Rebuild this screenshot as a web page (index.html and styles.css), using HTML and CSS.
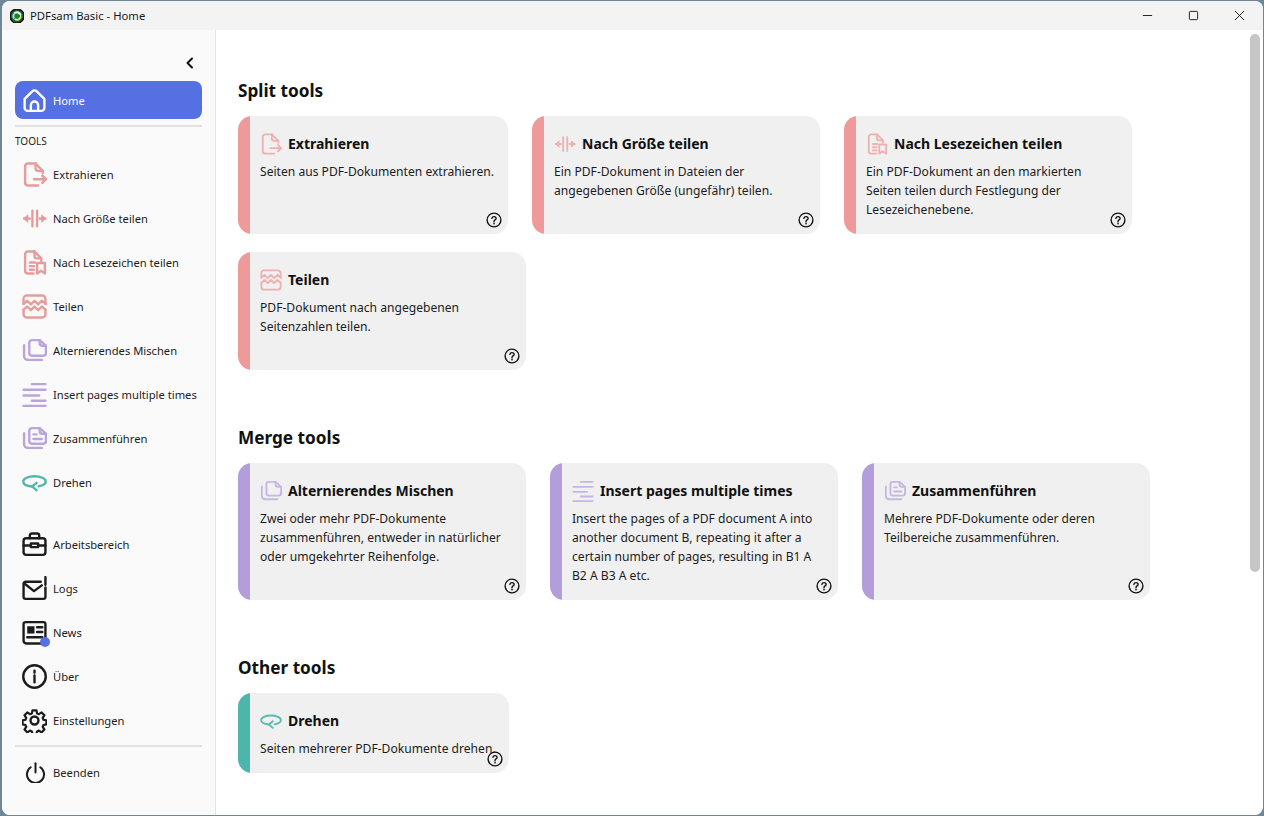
FILE: index.html
```html
<!DOCTYPE html>
<html lang="de">
<head>
<meta charset="utf-8">
<title>PDFsam Basic - Home</title>
<link rel="stylesheet" href="styles.css">
</head>
<body>
<svg class="sprite" aria-hidden="true">
<defs>
<symbol id="i-home" viewBox="0 0 24 24"><path d="M2.500 10.500 9.800 3.200a3 3 0 0 1 4.400 0l7.300 7.300V19a3 3 0 0 1-3 3h-13a3 3 0 0 1-3-3z"/><path d="M8.500 22v-5.500a3.500 3.500 0 0 1 7 0V22"/></symbol>
<symbol id="i-extract" viewBox="0 0 24 24"><path d="M13 1.500H5.500A2.500 2.500 0 0 0 3 4v16a2.500 2.500 0 0 0 2.500 2.500H15.500"/><path d="M13 1.500 20 8.500v2"/><path d="M13 1.500V6a2.500 2.500 0 0 0 2.500 2.500H20"/><path d="M11.500 16.500H23M19.500 13l3.500 3.500-3.500 3.500"/></symbol>
<symbol id="i-size" viewBox="0 0 24 24"><path d="M10 4.500v15M14.500 4.500v15"/><path d="M2 12h5.500M22.500 12H17"/><path class="fill" d="M6 7.800v8.400L.8 12zM18.500 7.800v8.400l5-4.200z"/></symbol>
<symbol id="i-bookmark" viewBox="0 0 24 24"><path d="M12 1.500H5.500A2.500 2.500 0 0 0 3 4v16a2.500 2.500 0 0 0 2.500 2.500H11"/><path d="M12 1.500 18.500 8v2.500"/><path d="M12 1.500V6a2 2 0 0 0 2 2h4.500"/><path d="M7.500 12h5M7.500 15.500h4M7.500 19h4"/><path d="M14.500 12.500h7.500v10l-3.700-2.500-3.800 2.500z"/></symbol>
<symbol id="i-split" viewBox="0 0 24 24"><path d="M1.500 9.500V4.500a3 3 0 0 1 3-3h15a3 3 0 0 1 3 3v5"/><path d="M1.500 9.500l3.500-3 3.500 3.500 3.500-3.500 3.500 3.500 3.500-3.500 4 3"/><path d="M1.500 15l3.500-3 3.500 3.500L12 12l3.500 3.500L19 12l3.500 3"/><path d="M1.500 15v4.500a3 3 0 0 0 3 3h15a3 3 0 0 0 3-3V15"/></symbol>
<symbol id="i-mix" viewBox="0 0 24 24"><path d="M7 4.500A2.500 2.500 0 0 1 9.500 2h7.500l6 5.500v7A2.500 2.500 0 0 1 20.500 17h-11A2.500 2.500 0 0 1 7 14.500z"/><path d="M17 2v3a2.500 2.500 0 0 0 2.500 2.500H23"/><path d="M2 7v10.500A3.500 3.500 0 0 0 5.500 21H19"/></symbol>
<symbol id="i-insert" viewBox="0 0 24 24"><path d="M9.500 2h13M1.500 7.500h21M1.500 13h15M9.500 18h13M1.500 23h21"/></symbol>
<symbol id="i-merge" viewBox="0 0 24 24"><path d="M7 4.500A2.500 2.500 0 0 1 9.500 2h7.500l6 5.500v7A2.500 2.500 0 0 1 20.500 17h-11A2.500 2.500 0 0 1 7 14.500z"/><path d="M17 2v3a2.500 2.500 0 0 0 2.500 2.500H23"/><path d="M2 7v10.500A3.500 3.500 0 0 0 5.500 21H19"/><path d="M11 8h3M11 12.500h8"/></symbol>
<symbol id="i-rotate" viewBox="0 0 24 24"><path d="M9.500 15.800C4.500 15.300 1.200 13.500 1.200 11 1.200 8.100 6 6 12 6s10.800 2.100 10.800 5c0 2.200-3 4-6.800 4.600"/><path d="M14 12.300l-4.200 3.500 4.200 3.700"/></symbol>
<symbol id="i-work" viewBox="0 0 24 24"><rect x="1.500" y="6" width="21" height="16" rx="2.500"/><path d="M7.500 6V3.500a2 2 0 0 1 2-2h5a2 2 0 0 1 2 2V6"/><path d="M1.500 13h6.500M16 13h6.500"/><path d="M8.500 11h7v3.500h-7z"/></symbol>
<symbol id="i-logs" viewBox="0 0 24 24"><path d="M18 5.500H3.500a2 2 0 0 0-2 2V20a2 2 0 0 0 2 2h17a2 2 0 0 0 2-2v-7"/><path d="M2 7l9.500 7.500L19 9"/><path d="M22.500 1v7.500M22.500 11v1"/></symbol>
<symbol id="i-news" viewBox="0 0 24 24"><path d="M4 22.500a2.500 2.500 0 0 1-2.500-2.500V4A2 2 0 0 1 3.500 2h17a2 2 0 0 1 2 2v16a2 2 0 0 1-2 2.500z"/><path class="fill" d="M5 6h7v7H5z"/><path d="M14.500 7h5M14.500 11.500h5M5 16.500h14.500"/></symbol>
<symbol id="i-info" viewBox="0 0 24 24"><circle cx="12" cy="12" r="10.800"/><path d="M12 11v6.500"/><path d="M12 6.500v1.800"/></symbol>
<symbol id="i-gear" viewBox="0 0 24 24"><circle cx="12" cy="12" r="3.800"/><path d="M10 1.500h4l.7 3.200 1.900.8 2.800-1.800 2.900 2.900-1.800 2.800.8 1.900 3 .7v4l-3 .7-.8 1.900 1.800 2.800-2.900 2.900-2.800-1.800-1.900.8-.7 2.900h-4l-.7-2.900-1.900-.8-2.800 1.800-2.900-2.900 1.800-2.800-.8-1.900-3-.7v-4l3-.7.8-1.900-1.800-2.800 2.900-2.900 2.800 1.800 1.900-.8z" transform="translate(.8 .8) scale(.93)"/></symbol>
<symbol id="i-power" viewBox="0 0 24 24"><path d="M12 1.500V12"/><path d="M6.500 6A9.800 9.800 0 1 0 17.500 6"/></symbol>
<symbol id="i-help" viewBox="0 0 16 16"><circle cx="8" cy="8" r="6.900"/><path d="M5.900 6.300A2.100 2.100 0 0 1 8 4.600c1.200 0 2.100.8 2.100 1.800 0 1.500-2.100 1.500-2.100 3"/><path d="M8 11v.9"/></symbol>
</defs>
</svg>

<div class="window">
  <header class="titlebar">
    <svg class="logo" viewBox="0 0 16 16" aria-hidden="true"><circle cx="8" cy="8" r="7.800" fill="#12813f"/><path class="logo-a" d="M5.500 4.600A4.300 4.300 0 0 1 12 6.600"/><path class="logo-b" d="M12.200 9a4.300 4.300 0 0 1-6 2.800"/><path class="logo-c" d="M4.300 10a4.300 4.300 0 0 1 0-3.800"/></svg>
    <span class="title-text">PDFsam Basic - Home</span>
    <div class="win-buttons">
      <span class="win-btn"><svg viewBox="0 0 12 12"><path d="M1 6h10"/></svg></span>
      <span class="win-btn"><svg viewBox="0 0 12 12"><rect x="1.500" y="1.500" width="9" height="9" rx="1"/></svg></span>
      <span class="win-btn"><svg viewBox="0 0 12 12"><path d="M1 1l10 10M11 1 1 11"/></svg></span>
    </div>
  </header>

  <div class="main">
    <aside class="sidebar">
      <div class="collapse"><svg viewBox="0 0 12 12"><path d="M8 1.500 3.500 6 8 10.500"/></svg></div>
      <a class="nav-item active"><svg class="nav-icon"><use href="#i-home"/></svg><span>Home</span></a>
      <div class="rule"></div>
      <div class="nav-label">TOOLS</div>
      <nav class="nav-tools">
        <a class="nav-item pink"><svg class="nav-icon"><use href="#i-extract"/></svg><span>Extrahieren</span></a>
        <a class="nav-item pink"><svg class="nav-icon"><use href="#i-size"/></svg><span>Nach Größe teilen</span></a>
        <a class="nav-item pink"><svg class="nav-icon"><use href="#i-bookmark"/></svg><span>Nach Lesezeichen teilen</span></a>
        <a class="nav-item pink"><svg class="nav-icon"><use href="#i-split"/></svg><span>Teilen</span></a>
        <a class="nav-item purple"><svg class="nav-icon"><use href="#i-mix"/></svg><span>Alternierendes Mischen</span></a>
        <a class="nav-item purple"><svg class="nav-icon"><use href="#i-insert"/></svg><span>Insert pages multiple times</span></a>
        <a class="nav-item purple"><svg class="nav-icon"><use href="#i-merge"/></svg><span>Zusammenführen</span></a>
        <a class="nav-item teal"><svg class="nav-icon"><use href="#i-rotate"/></svg><span>Drehen</span></a>
      </nav>
      <nav class="nav-bottom">
        <a class="nav-item"><svg class="nav-icon"><use href="#i-work"/></svg><span>Arbeitsbereich</span></a>
        <a class="nav-item"><svg class="nav-icon"><use href="#i-logs"/></svg><span>Logs</span></a>
        <a class="nav-item"><span class="icon-wrap"><svg class="nav-icon"><use href="#i-news"/></svg><i class="dot"></i></span><span>News</span></a>
        <a class="nav-item"><svg class="nav-icon"><use href="#i-info"/></svg><span>Über</span></a>
        <a class="nav-item"><svg class="nav-icon"><use href="#i-gear"/></svg><span>Einstellungen</span></a>
      </nav>
      <div class="rule rule-bottom"></div>
      <a class="nav-item quit"><svg class="nav-icon"><use href="#i-power"/></svg><span>Beenden</span></a>
    </aside>

    <main class="content">
      <section class="group">
        <h2>Split tools</h2>
        <div class="cards">
          <article class="card pink w270">
            <h3><svg class="card-icon"><use href="#i-extract"/></svg>Extrahieren</h3>
            <p>Seiten aus PDF-Dokumenten extrahieren.</p>
            <svg class="help"><use href="#i-help"/></svg>
          </article>
          <article class="card pink">
            <h3><svg class="card-icon"><use href="#i-size"/></svg>Nach Größe teilen</h3>
            <p>Ein PDF-Dokument in Dateien der angegebenen Größe (ungefähr) teilen.</p>
            <svg class="help"><use href="#i-help"/></svg>
          </article>
          <article class="card pink">
            <h3><svg class="card-icon"><use href="#i-bookmark"/></svg>Nach Lesezeichen teilen</h3>
            <p>Ein PDF-Dokument an den markierten Seiten teilen durch Festlegung der Lesezeichenebene.</p>
            <svg class="help"><use href="#i-help"/></svg>
          </article>
          <article class="card pink">
            <h3><svg class="card-icon"><use href="#i-split"/></svg>Teilen</h3>
            <p>PDF-Dokument nach angegebenen Seitenzahlen teilen.</p>
            <svg class="help"><use href="#i-help"/></svg>
          </article>
        </div>
      </section>

      <section class="group merge">
        <h2>Merge tools</h2>
        <div class="cards">
          <article class="card purple tall">
            <h3><svg class="card-icon"><use href="#i-mix"/></svg>Alternierendes Mischen</h3>
            <p>Zwei oder mehr PDF-Dokumente zusammenführen, entweder in natürlicher oder umgekehrter Reihenfolge.</p>
            <svg class="help"><use href="#i-help"/></svg>
          </article>
          <article class="card purple tall">
            <h3><svg class="card-icon"><use href="#i-insert"/></svg>Insert pages multiple times</h3>
            <p>Insert the pages of a PDF document A into another document B, repeating it after a certain number of pages, resulting in B1 A B2 A B3 A etc.</p>
            <svg class="help"><use href="#i-help"/></svg>
          </article>
          <article class="card purple tall">
            <h3><svg class="card-icon"><use href="#i-merge"/></svg>Zusammenführen</h3>
            <p>Mehrere PDF-Dokumente oder deren Teilbereiche zusammenführen.</p>
            <svg class="help"><use href="#i-help"/></svg>
          </article>
        </div>
      </section>

      <section class="group other">
        <h2>Other tools</h2>
        <div class="cards">
          <article class="card teal short">
            <h3><svg class="card-icon"><use href="#i-rotate"/></svg>Drehen</h3>
            <p>Seiten mehrerer PDF-Dokumente drehen.</p>
            <svg class="help"><use href="#i-help"/></svg>
          </article>
        </div>
      </section>
      <div class="scrollbar"></div>
    </main>
  </div>
</div>
</body>
</html>
```

FILE: styles.css
```css
* { box-sizing: border-box; }
html, body { margin: 0; height: 100%; }
body {
  background: #6d8799;
  font-family: "Noto Sans", "Open Sans", sans-serif;
  color: #1c1c1c;
  overflow: hidden;
}
.sprite { position: absolute; width: 0; height: 0; }
svg { fill: none; stroke: currentColor; stroke-width: 2; stroke-linecap: round; stroke-linejoin: round; }
svg .fill, .fill { fill: currentColor; stroke: none; }

.window {
  margin: 1px 1px 1px 2px;
  height: 814px;
  border-radius: 8px;
  background: #fff;
  overflow: hidden;
  display: flex;
  flex-direction: column;
}

.titlebar {
  height: 29px;
  flex: none;
  background: #f3f3f3;
  display: flex;
  align-items: center;
  padding-left: 8px;
}
.logo { width: 14px; height: 14px; stroke-width: 2.200; margin-right: 6px; }
.logo-a { stroke: #f6f6e0; }
.logo-b { stroke: #f2dc70; }
.logo-c { stroke: #a8dcea; }
.title-text { font-size: 11.300px; color: #1a1a1a; }
.win-buttons { margin-left: auto; display: flex; padding-right: 1px; }
.win-btn { width: 46px; height: 29px; display: flex; align-items: center; justify-content: center; }
.win-btn svg { width: 11px; height: 11px; stroke-width: 1; stroke-linecap: butt; color: #111; }

.main { flex: 1; display: flex; min-height: 0; }

.sidebar {
  width: 214px;
  flex: none;
  background: #fafafa;
  border-right: 1px solid #e6e6e6;
  padding: 0 13px;
  display: flex;
  flex-direction: column;
}
.collapse { height: 51px; padding: 27px 6px 0 0; display: flex; justify-content: flex-end; }
.collapse svg { width: 12px; height: 12px; stroke-width: 2; color: #111; }

.nav-item {
  display: flex;
  align-items: center;
  height: 44px;
  padding-left: 7px;
  font-size: 11.200px;
  white-space: nowrap;
  color: #1c1c1c;
  gap: 6px;
}
.nav-icon { width: 25px; height: 25px; flex: none; stroke-width: 2.300; }
.nav-item.pink .nav-icon { color: #e79c9c; }
.nav-item.purple .nav-icon { color: #b9a5dc; }
.nav-item.teal .nav-icon { color: #54b5ab; }
.nav-item.active {
  height: 38px;
  background: #5570e2;
  color: #fff;
  border-radius: 8px;
}
.rule { height: 2px; background: #e2e2e2; margin-top: 6px; flex: none; }
.nav-label { font-size: 10px; height: 14px; line-height: 14px; margin: 7px 0 4px; }
.nav-tools { display: flex; flex-direction: column; }
.nav-bottom { display: flex; flex-direction: column; margin-top: 18px; }
.rule-bottom { margin-top: 3px; }
.quit { margin-top: 1px; height: 48px; padding-left: 10px; gap: 7px; }
.quit .nav-icon { width: 21px; height: 21px; }
.icon-wrap { position: relative; display: flex; }
.dot { position: absolute; right: -3px; bottom: -2px; width: 10px; height: 10px; border-radius: 50%; background: #5570e2; }

.content { flex: 1; position: relative; padding: 50px 0 0 22px; min-width: 0; }
.scrollbar { position: absolute; top: 4px; right: 3px; width: 10px; height: 538px; border-radius: 5px; background: #c6c6c6; }

h2 { margin: 0 0 14px; font-size: 17.200px; line-height: 22px; font-weight: 700; color: #111; }
.merge { margin-top: 57px; }
.other { margin-top: 57px; }

.cards { display: flex; flex-wrap: wrap; gap: 18px 24px; width: 980px; }
.card {
  position: relative;
  width: 288px;
  height: 118px;
  border-radius: 14px;
  padding: 17px 0 0 22px;
}
.card.w270 { width: 270px; }
.card.tall { height: 137px; }
.card.short { width: 271px; height: 80px; }
.card.pink { background: linear-gradient(to right, #ef9a9a 12px, #f0f0f0 12px); }
.card.purple { background: linear-gradient(to right, #b39ddb 12px, #f0f0f0 12px); }
.card.teal { background: linear-gradient(to right, #4db6ac 12px, #f0f0f0 12px); }
.card h3 {
  margin: 0 0 7px;
  display: flex;
  align-items: center;
  gap: 6px;
  font-size: 14px;
  line-height: 22px;
  font-weight: 700;
  color: #111;
  height: 22px;
}
.card-icon { width: 22px; height: 22px; flex: none; stroke-width: 2; }
.card.pink .card-icon { color: #eeb0b0; }
.card.purple .card-icon { color: #c6b6e3; }
.card.teal .card-icon { color: #5bbab0; }
.card p { margin: 0; max-width: 248px; font-size: 12.100px; line-height: 19px; color: #1c1c1c; }
.help { position: absolute; right: 6px; bottom: 6px; width: 16px; height: 16px; stroke-width: 1.400; color: #111; }
```
